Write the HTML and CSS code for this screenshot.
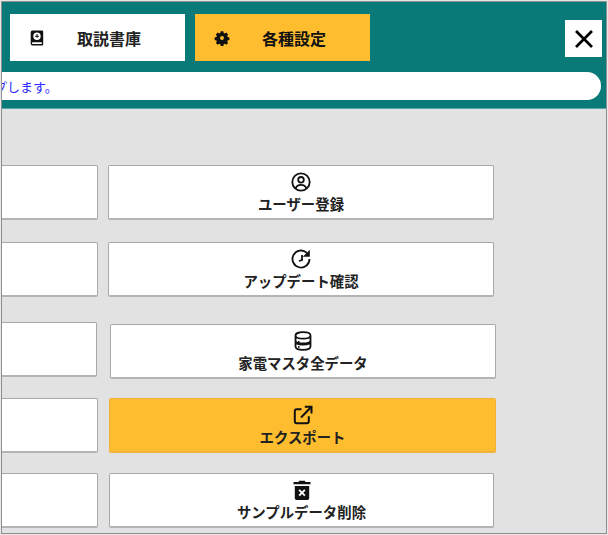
FILE: index.html
```html
<!DOCTYPE html>
<html lang="ja">
<head>
<meta charset="utf-8">
<title>各種設定</title>
<link rel="stylesheet" href="styles.css">
</head>
<body>
<div class="frame">
  <header class="header">
    <div class="tabs">
      <button class="tab">
        <svg class="tab-icon" viewBox="0 0 16 16"><path fill-rule="evenodd" d="M3.500 .5H13a1.200 1.200 0 0 1 1.200 1.200v12.600A1.200 1.200 0 0 1 13 15.500H3.500a1.800 1.800 0 0 1-1.800-1.800V2.300A1.800 1.800 0 0 1 3.500 .5zM8 2.600a3.700 3.700 0 1 0 0 7.400 3.700 3.700 0 0 0 0-7.400zM3.800 12.200a.9.900 0 0 0 0 1.800H12.800v-1.800z"/><path d="M7.500 4h1v1.800h1.500v1H8.500v1h-1v-1H6v-1h1.500z"/></svg>
        <span class="tab-label">取説書庫</span>
      </button>
      <button class="tab tab-active">
        <svg class="tab-icon" viewBox="-1 -1 18 18"><path fill-rule="evenodd" d="M6.500 .5h3l.4 2 1.200.5 1.700-1.100 2.100 2.100-1.100 1.700.5 1.200 2 .4v3l-2 .4-.5 1.200 1.100 1.700-2.100 2.100-1.700-1.100-1.200.5-.4 2h-3l-.4-2-1.200-.5-1.700 1.100-2.100-2.100 1.100-1.700-.5-1.200-2-.4v-3l2-.4.5-1.200-1.100-1.700 2.100-2.100 1.700 1.100 1.200-.5zM8 5.800a2.200 2.200 0 1 0 0 4.400 2.200 2.200 0 0 0 0-4.400z"/></svg>
        <span class="tab-label">各種設定</span>
      </button>
      <button class="close" aria-label="閉じる">
        <svg class="close-icon" viewBox="0 0 20 20"><path d="M2 2l16 16M18 2L2 18"/></svg>
      </button>
    </div>
    <div class="notice"><span class="notice-text">バックアップします。</span></div>
  </header>
  <main class="panel">
    <div class="row row-1">
      <button class="btn btn-left"></button>
      <button class="btn btn-right">
        <svg class="btn-icon" viewBox="0 0 20 20"><circle cx="10" cy="10" r="8.700"/><circle cx="10" cy="7.800" r="2.800"/><path d="M4.500 16.500c.9-2.500 2.900-3.700 5.500-3.700s4.600 1.200 5.500 3.700"/></svg>
        <span>ユーザー登録</span>
      </button>
    </div>
    <div class="row row-2">
      <button class="btn btn-left"></button>
      <button class="btn btn-right">
        <svg class="btn-icon" viewBox="0 0 20 20"><path d="M15.800 3.800A8.500 8.500 0 1 0 18.500 10"/><path class="solid" d="M18.800 .8v7h-7z"/><path d="M11 6v5l-3 1"/></svg>
        <span>アップデート確認</span>
      </button>
    </div>
    <div class="row row-3">
      <button class="btn btn-left"></button>
      <button class="btn btn-right">
        <svg class="btn-icon" viewBox="0 0 20 20"><path d="M2.500 4.500c0-2 3.400-3.300 7.500-3.300s7.500 1.300 7.500 3.300v11c0 2-3.400 3.300-7.500 3.300s-7.500-1.300-7.500-3.300zM2.500 4.500c0 2 3.400 3.200 7.500 3.200s7.500-1.200 7.500-3.200M2.500 9.500c0 1.800 3.400 3 7.500 3s7.500-1.200 7.500-3M2.500 10.500c0 1.800 3.400 3 7.500 3s7.500-1.200 7.500-3"/><path d="M5 11h1.500M5 15.800h1.500"/></svg>
        <span>家電マスタ全データ</span>
      </button>
    </div>
    <div class="row row-4">
      <button class="btn btn-left"></button>
      <button class="btn btn-right btn-active">
        <svg class="btn-icon icon-heavy" viewBox="0 0 20 20"><path d="M8.500 4.200H3.800a2 2 0 0 0-2 2v10a2 2 0 0 0 2 2h10a2 2 0 0 0 2-2v-5"/><path d="M8 12.500L18 2.300M11.800 1.800h6.700v6.700"/></svg>
        <span>エクスポート</span>
      </button>
    </div>
    <div class="row row-5">
      <button class="btn btn-left"></button>
      <button class="btn btn-right">
        <svg class="btn-icon" viewBox="0 0 20 20"><path class="solid" fill-rule="evenodd" d="M7.200 .8h5.600l.8 1.300H18.500V4.300H1.500V2.100h4.900zM2.800 6h14.400v12.200a1.800 1.800 0 0 1-1.800 1.800H4.600a1.800 1.800 0 0 1-1.800-1.800zM7.800 9.300L6.500 10.600 8.700 12.800l-2.200 2.200 1.300 1.300 2.200-2.200 2.200 2.200 1.300-1.300-2.200-2.200 2.200-2.200-1.300-1.300-2.200 2.200z"/></svg>
        <span>サンプルデータ削除</span>
      </button>
    </div>
  </main>
</div>
</body>
</html>
```
FILE: styles.css
```css
* { box-sizing: border-box; }
html, body { margin: 0; padding: 0; height: 100%; background: #e8e8e8; }
body { font-family: "Noto Sans CJK JP", "Noto Sans", sans-serif; overflow: hidden; padding: 1px; }
button { font-family: inherit; margin: 0; padding: 0; cursor: pointer; }

.frame {
  width: 606px;
  height: 533px;
  border: 1px solid #8f8f8f;
  overflow: hidden;
  display: flex;
  flex-direction: column;
  background: #e2e2e2;
}

.header {
  height: 107px;
  flex: none;
  background: #097a78;
  padding: 12px 4px 0 0;
  border-bottom: 1px solid #5fa5a3;
}

.tabs { display: flex; height: 47px; padding-left: 8px; }

.tab {
  width: 175px;
  height: 47px;
  margin-right: 10px;
  border: 0;
  background: #fff;
  color: #222;
  display: flex;
  align-items: center;
  padding-left: 19px;
}
.tab-active { background: #febd2e; color: #111; }
.tab-icon { width: 16px; height: 16px; fill: #111; flex: none; }
.tab-label { font-size: 16px; font-weight: 700; line-height: 1; margin-left: 32px; }

.close {
  width: 37px;
  height: 37px;
  margin: 6px 0 0 auto;
  border: 0;
  background: #fff;
  display: flex;
  align-items: center;
  justify-content: center;
}
.close-icon { width: 20px; height: 20px; fill: none; stroke: #000; stroke-width: 2.700; }

.notice {
  height: 28px;
  margin-top: 11px;
  width: 599px;
  background: #fff;
  border-radius: 0 14px 14px 0;
  overflow: hidden;
  display: flex;
  align-items: center;
  justify-content: flex-start;
}
.notice-text {
  flex: none;
  margin-left: -73px;
  font-size: 13px;
  line-height: 1;
  color: #2b2bff;
  white-space: nowrap;
}

.panel { flex: 1; min-height: 0; padding-top: 56px; overflow: hidden; }

.row { display: flex; height: 55px; }
.row-2 { margin-top: 22px; }
.row-3 { margin-top: 26px; }
.row-4 { margin-top: 20px; }
.row-5 { margin-top: 20px; }

.btn {
  height: 55px;
  background: #fff;
  border: 1px solid #a8a8a8;
  border-bottom: 2px solid #b4b4b4;
  border-radius: 2px;
  color: #222;
  font-size: 14.400px;
  font-weight: 700;
  line-height: 1;
  display: flex;
  flex-direction: column;
  align-items: center;
}
.btn-left { width: 200px; margin-left: -104px; flex: none; }
.btn-right { width: 386px; margin-left: 10px; flex: none; padding-top: 6px; }
.btn-active { background: #febd2e; border-color: #f0b43a; }
.btn-icon {
  width: 20px;
  height: 20px;
  fill: none;
  stroke: #111;
  stroke-width: 1.800;
  margin-bottom: 5px;
  flex: none;
}
.icon-heavy { stroke-width: 2; }
.btn-icon .solid { fill: #111; stroke: none; }

.row-3 .btn-left { margin-left: -105px; margin-top: -1px; }
.row-3 .btn-right { margin-left: 13px; margin-top: 1px; }
.row-4 .btn-right { margin-left: 11px; width: 387px; }
.row-5 .btn-right { margin-left: 11px; width: 385px; }
```
